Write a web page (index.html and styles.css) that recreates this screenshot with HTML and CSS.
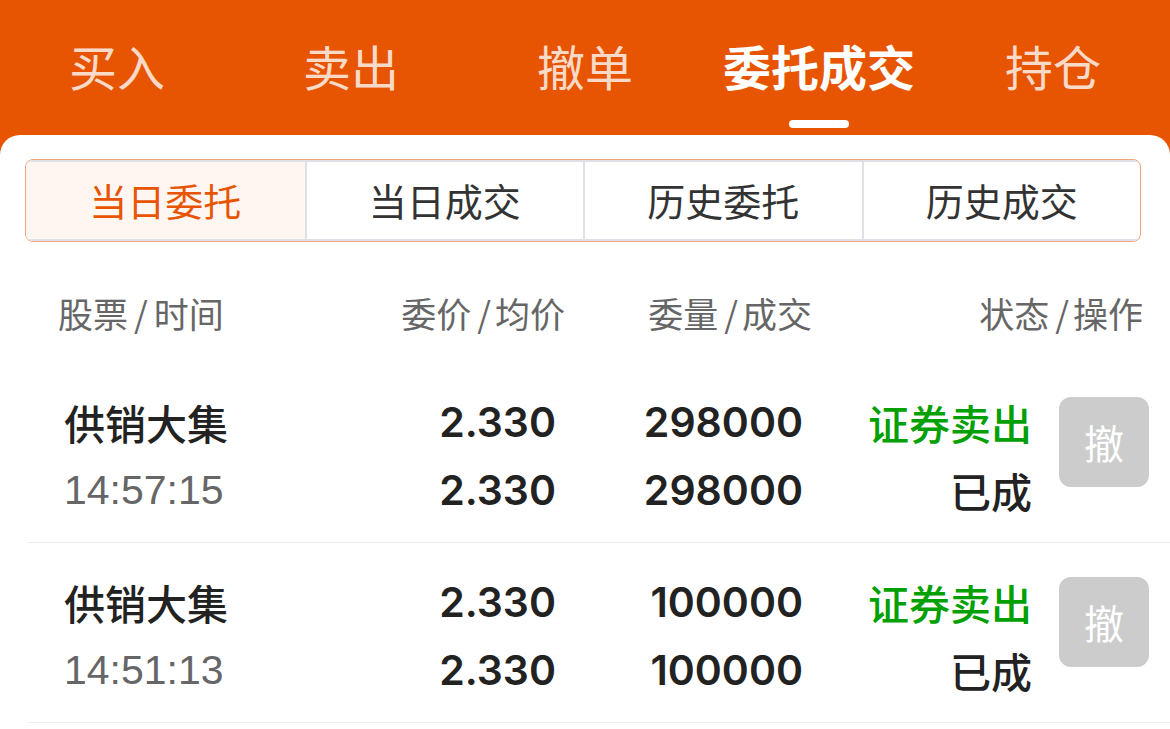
FILE: index.html
```html
<!DOCTYPE html>
<html lang="zh-CN">
<head>
    <meta charset="UTF-8">
    <meta name="viewport" content="width=device-width, initial-scale=1.0">
    <title>委托成交</title>
    <link rel="stylesheet" href="styles.css">
</head>
<body>
<div class="page">

    <!-- Top tabs -->
    <div class="nav">
        <div class="nav-item">买入</div>
        <div class="nav-item">卖出</div>
        <div class="nav-item">撤单</div>
        <div class="nav-item active">委托成交<span class="nav-bar"></span></div>
        <div class="nav-item">持仓</div>
    </div>

    <div class="card">
        <!-- Sub tabs -->
        <div class="segment">
            <div class="seg-item active">当日委托</div>
            <div class="seg-item">当日成交</div>
            <div class="seg-item">历史委托</div>
            <div class="seg-item">历史成交</div>
        </div>

        <div class="table-head">
            <div>股票<span class="sep">/</span>时间</div>
            <div class="right">委价<span class="sep">/</span>均价</div>
            <div class="right">委量<span class="sep">/</span>成交</div>
            <div class="right">状态<span class="sep">/</span>操作</div>
        </div>

        <div class="order-row">
            <div class="cell">
                <div class="name">供销大集</div>
                <div class="time">14:57:15</div>
            </div>
            <div class="cell right num">
                <div>2.330</div>
                <div>2.330</div>
            </div>
            <div class="cell right num">
                <div>298000</div>
                <div>298000</div>
            </div>
            <div class="cell right">
                <div class="status-sell">证券卖出</div>
                <div class="status-done">已成</div>
            </div>
            <div class="cell action">
                <button class="cancel-btn" disabled>撤</button>
            </div>
        </div>

        <div class="order-row">
            <div class="cell">
                <div class="name">供销大集</div>
                <div class="time">14:51:13</div>
            </div>
            <div class="cell right num">
                <div>2.330</div>
                <div>2.330</div>
            </div>
            <div class="cell right num">
                <div>100000</div>
                <div>100000</div>
            </div>
            <div class="cell right">
                <div class="status-sell">证券卖出</div>
                <div class="status-done">已成</div>
            </div>
            <div class="cell action">
                <button class="cancel-btn" disabled>撤</button>
            </div>
        </div>
    </div>

</div>
</body>
</html>
```

FILE: styles.css
```css
:root {
    --orange: #e85502;
    --text: #222222;
    --muted: #666666;
    --green: #02a002;
    --line: #ececec;
}

* {
    margin: 0;
    padding: 0;
    box-sizing: border-box;
}

body {
    font-family: "Liberation Sans", "Noto Sans CJK SC", sans-serif;
    background: #ffffff;
    color: var(--text);
}

.page {
    min-height: 100vh;
    display: flex;
    flex-direction: column;
    background: var(--orange);
}

/* top tabs */
.nav {
    display: grid;
    grid-template-columns: repeat(5, 1fr);
    height: 135px;
    padding-top: 41px;
}

.nav-item {
    display: flex;
    flex-direction: column;
    align-items: center;
    font-family: "Noto Sans CJK SC", sans-serif;
    font-size: 48px;
    line-height: 48px;
    color: rgba(255, 255, 255, 0.8);
}

.nav-item.active {
    color: #ffffff;
    font-weight: 700;
}

.nav-bar {
    width: 60px;
    height: 8px;
    margin-top: 31px;
    border-radius: 4px;
    background: #ffffff;
}

/* white card */
.card {
    flex: 1;
    background: #ffffff;
    border-radius: 20px 20px 0 0;
    padding-top: 24px;
}

.segment {
    display: grid;
    grid-template-columns: repeat(4, 1fr);
    margin: 0 29px 0 25px;
    height: 83px;
    border: 1px solid #f2a47f;
    border-radius: 8px;
    overflow: hidden;
}

.seg-item {
    display: flex;
    align-items: center;
    justify-content: center;
    padding-bottom: 3px;
    font-family: "Noto Sans CJK SC", sans-serif;
    font-size: 38px;
    color: #333333;
    border-top: 2px solid #dfe1e6;
    border-bottom: 2px solid #dfe1e6;
    border-left: 2px solid #dfe1e6;
}

.seg-item:first-child {
    border-left: none;
}

.seg-item.active {
    color: var(--orange);
    background: #fff5f1;
}

/* table */
.table-head {
    display: grid;
    grid-template-columns: 242px 265px 247px 331px;
    margin: 35px 0 16px 58px;
    height: 70px;
    align-items: center;
    font-family: "Noto Sans CJK SC", sans-serif;
    font-size: 35px;
    color: var(--muted);
}

.sep {
    margin: 0 6px;
}

.table-head .right .sep {
    margin-right: 4px;
}

.right {
    text-align: right;
}

.order-row {
    display: grid;
    grid-template-columns: 240px 252px 247px 229px 117px;
    margin-left: 28px;
    padding: 25px 21px 18px 36px;
    border-bottom: 1px solid var(--line);
}

.cell > div {
    height: 68px;
    line-height: 68px;
    white-space: nowrap;
}

.name {
    font-family: "Noto Sans CJK SC", sans-serif;
    font-size: 41px;
    font-weight: 500;
    color: var(--text);
}

.time {
    font-size: 41px;
    color: var(--muted);
}

.num {
    font-family: Inter, "Liberation Sans", sans-serif;
    font-size: 41px;
    font-weight: 600;
    color: var(--text);
}

.status-sell {
    font-family: "Noto Sans CJK SC", sans-serif;
    font-size: 41px;
    font-weight: 500;
    color: var(--green);
}

.status-done {
    font-family: "Noto Sans CJK SC", sans-serif;
    font-size: 41px;
    font-weight: 500;
    color: var(--text);
}

.action {
    display: flex;
    justify-content: flex-end;
    align-items: flex-start;
}

.cancel-btn {
    width: 90px;
    height: 90px;
    margin-top: 9px;
    border: none;
    border-radius: 12px;
    background: #cccccc;
    color: #ffffff;
    font-family: "Noto Sans CJK SC", sans-serif;
    font-size: 40px;
}
```
